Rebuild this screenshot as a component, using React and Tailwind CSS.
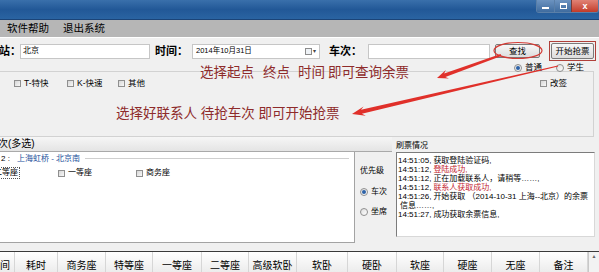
import React from 'react';

const Check = () => (
  <span className="inline-block h-[7px] w-[7px] shrink-0 border border-[#8f8f8f] bg-linear-to-br from-[#d6d6d6] to-[#f8f8f8]" />
);

const Radio = ({ on }) => (
  <span className="flex h-[8px] w-[8px] shrink-0 items-center justify-center rounded-full border border-[#8f8f8f] bg-linear-to-br from-[#dedede] to-white">
    {on && <span className="h-[4px] w-[4px] rounded-full bg-[#2d62a8]" />}
  </span>
);

// tapered arrow polygon from tail to tip
const arrowPoints = (x1, y1, x2, y2, w0, w1, hl, hw) => {
  const dx = x2 - x1;
  const dy = y2 - y1;
  const len = Math.hypot(dx, dy);
  const ux = dx / len;
  const uy = dy / len;
  const nx = -uy;
  const ny = ux;
  const bx = x2 - ux * hl;
  const by = y2 - uy * hl;
  const cx = x2 - ux * (hl * 0.75);
  const cy = y2 - uy * (hl * 0.75);
  return [
    [x1 + nx * w0, y1 + ny * w0],
    [cx + nx * w1, cy + ny * w1],
    [bx + nx * hw, by + ny * hw],
    [x2, y2],
    [bx - nx * hw, by - ny * hw],
    [cx - nx * w1, cy - ny * w1],
    [x1 - nx * w0, y1 - ny * w0],
  ]
    .map((p) => p.map((v) => v.toFixed(1)).join(','))
    .join(' ');
};

const logLines = [
  { t: '14:51:05,', m: '获取登陆验证码,' },
  { t: '14:51:12,', m: '登陆成功,', red: true },
  { t: '14:51:12,', m: '正在加载联系人，请稍等……,' },
  { t: '14:51:12,', m: '联系人获取成功,', red: true },
  { t: '14:51:26,', m: '开始获取 （2014-10-31 上海--北京）的余票' },
  { t: '', m: '信息……,' },
  { t: '14:51:27,', m: '成功获取余票信息,' },
];

const columns = [
  { label: '间', w: 15, right: true },
  { label: '耗时', w: 43 },
  { label: '商务座', w: 48 },
  { label: '特等座', w: 47 },
  { label: '一等座', w: 49 },
  { label: '二等座', w: 47 },
  { label: '高级软卧', w: 48 },
  { label: '软卧', w: 51 },
  { label: '硬卧', w: 49 },
  { label: '软座', w: 47 },
  { label: '硬座', w: 48 },
  { label: '无座', w: 48 },
  { label: '备注', w: 48 },
];

export default function App() {
  return (
    <div className="relative h-[272px] w-[599px] overflow-hidden bg-[#f0f0f0] font-['Liberation_Sans','Noto_Sans_CJK_SC',sans-serif] text-black">
      {/* title bar */}
      <div className="flex h-[20px] items-start justify-end border-b border-[#1b4478] bg-linear-to-b from-[#3a70ab] via-[#225897] to-[#2a64a2]">
        <div className="flex h-[13px] overflow-hidden rounded-b-[3px] border border-t-0 border-[#5a7fa8]">
          <div className="flex w-[17px] items-center justify-center bg-linear-to-b from-[#6c93c0] to-[#3f6c9f]">
            <span className="mt-[4px] h-[2px] w-[7px] bg-white" />
          </div>
          <div className="flex w-[17px] items-center justify-center border-l border-[#5a7fa8] bg-linear-to-b from-[#6c93c0] to-[#3f6c9f]">
            <span className="h-[6px] w-[7px] border border-t-2 border-white" />
          </div>
          <div className="flex w-[27px] items-center justify-center border-l border-[#7a3b35] bg-linear-to-b from-[#e08275] to-[#c23a28] text-[9px] font-bold leading-none text-white">
            x
          </div>
        </div>
      </div>

      {/* menu bar */}
      <div className="flex h-[17px] items-center gap-[14px] bg-[#b6b6b6] pl-[7px] text-[10.5px] leading-none">
        <span>软件帮助</span>
        <span>退出系统</span>
      </div>

      {/* query rows */}
      <div className="border-t border-white">
        <div className="flex h-[26px] items-center text-[8px]">
          <span className="ml-[-1px] w-[21px] text-[11px] font-bold leading-none">站：</span>
          <div className="flex h-[15px] w-[130px] items-center border border-[#c6c6c6] bg-white pl-[2px]">北京</div>
          <span className="ml-[5px] w-[37px] text-[11px] font-bold leading-none">时间：</span>
          <div className="flex h-[15px] w-[128px] items-center border border-[#c6c6c6] bg-white pl-[3px]">
            <span className="flex-1 text-[7.5px]">2014年10月31日</span>
            <span className="h-[7px] w-[7px] border border-[#8c8c8c] bg-[#eef2f6]" />
            <span className="ml-[1px] mr-[3px] text-[6px] text-[#444]">▾</span>
          </div>
          <span className="ml-[9px] w-[39px] text-[11px] font-bold leading-none">车次：</span>
          <div className="h-[15px] w-[122px] border border-[#c6c6c6] bg-white" />
          <button className="ml-[5px] flex h-[14px] w-[45px] items-center justify-center rounded-[2px] border border-[#7a7a7a] bg-linear-to-b from-[#f7f7f7] to-[#dddddd] text-[8.5px] leading-none">
            查找
          </button>
          <div className="ml-[9px] flex h-[20px] w-[47px] items-center justify-center border border-[#b0403a]">
            <button className="flex h-[16px] w-[43px] items-center justify-center rounded-[2px] border border-[#7a7a7a] bg-linear-to-b from-[#f7f7f7] to-[#dddddd] text-[8.5px] leading-none">
              开始抢票
            </button>
          </div>
        </div>
        <div className="flex h-[7px] items-center text-[8.5px] leading-none">
          <div className="ml-[514px] flex items-center gap-[3px]">
            <Radio on />
            <span>普通</span>
          </div>
          <div className="ml-[14px] flex items-center gap-[3px]">
            <Radio />
            <span>学生</span>
          </div>
        </div>
      </div>

      {/* filter group with notes */}
      <div className="h-[66px] w-[594px] border-t border-r border-b border-[#d2d2d2]">
        <div className="flex h-[22px] items-center text-[8.5px] leading-none">
          <div className="ml-[14px] flex w-[53px] items-center gap-[3px]">
            <Check />
            <span>T-特快</span>
          </div>
          <div className="flex w-[51px] items-center gap-[3px]">
            <Check />
            <span>K-快速</span>
          </div>
          <div className="flex w-[82px] items-center gap-[3px]">
            <Check />
            <span>其他</span>
          </div>
          <div className="mt-[-7px] flex w-[340px] self-start text-[13.5px] leading-[16px] text-[#8e2b2b]">
            <span className="mr-[9px]">选择起点</span>
            <span className="mr-[8px]">终点</span>
            <span className="mr-[3px]">时间</span>
            <span>即可查询余票</span>
          </div>
          <div className="flex items-center gap-[3px]">
            <Check />
            <span>改签</span>
          </div>
        </div>
        <div className="mt-[12px] pl-[116px] text-[13.5px] leading-[16px] text-[#8e2b2b]">
          选择好联系人 待抢车次 即可开始抢票
        </div>
      </div>

      {/* section titles */}
      <div className="flex h-[15px] items-center text-[8px] leading-none">
        <div className="flex h-full w-[392px] items-center border-b border-[#a9a9a9] bg-linear-to-b from-[#f6f6f6] to-[#e4e4e4]">
          <span className="ml-[-2px] text-[10px]">次(多选)</span>
        </div>
        <span className="ml-[4px] mt-[2px]">刷票情况</span>
      </div>

      {/* panels */}
      <div className="flex h-[91px] text-[8px] leading-none">
        <div className="w-[355px] border-r border-b border-[#a3a3a3] bg-white">
          <div className="flex h-[14px] items-center">
            <span className="ml-[1px] w-[16px]">2 :</span>
            <span className="text-[#23509a]">上海虹桥 - 北京南</span>
            <span className="ml-[5px] mr-[5px] h-[2px] flex-1 border-t border-b border-t-[#cfcfcf] border-b-white" />
          </div>
          <div className="flex h-[14px] items-center">
            <span className="ml-[-8px] border border-dotted border-[#555] px-[1px] py-[1px]">二等座</span>
            <div className="ml-[38px] flex items-center gap-[3px]">
              <Check />
              <span>一等座</span>
            </div>
            <div className="ml-[44px] flex items-center gap-[3px]">
              <Check />
              <span>商务座</span>
            </div>
          </div>
        </div>
        <div className="w-[41px] pt-[14px] pl-[5px]">
          <div className="h-[10px] leading-[10px]">优先级</div>
          <div className="mt-[11px] flex h-[10px] items-center gap-[3px]">
            <Radio on />
            <span>车次</span>
          </div>
          <div className="mt-[10px] flex h-[10px] items-center gap-[3px]">
            <Radio />
            <span>坐席</span>
          </div>
        </div>
        <div className="h-[85px] w-[199px] border border-t-[#7c7c7c] border-l-[#7c7c7c] border-r-[#d8d8d8] border-b-[#d8d8d8] bg-white pt-[3px] pl-[1px]">
          {logLines.map((l, i) => (
            <div key={i} className="h-[9px] whitespace-nowrap leading-[9px]">
              <span className="mr-[2px]">{l.t}</span>
              <span className={l.red ? 'text-[#c4262e]' : ''}>{l.m}</span>
            </div>
          ))}
        </div>
      </div>

      {/* result table header */}
      <div className="mt-[8px] flex h-[21px] border-t border-[#3a3a3a] text-[10px] leading-none">
        {columns.map((c) => (
          <div
            key={c.label}
            style={{ width: c.w }}
            className={`flex h-full shrink-0 items-end border-r border-[#d6d6d6] bg-linear-to-b from-[#ffffff] to-[#ececec] pb-[1px] ${
              c.right ? 'justify-end pr-[4px]' : 'justify-center'
            }`}
          >
            {c.label}
          </div>
        ))}
        <div className="flex h-full flex-1 justify-center border-l border-[#c8c8c8] bg-[#f2f2f2] pt-[2px] text-[5px] text-[#666]">
          ▲
        </div>
      </div>

      {/* red annotation marks */}
      <svg className="pointer-events-none absolute top-0 left-0" width="599" height="272">
        <ellipse cx="518" cy="50.5" rx="24" ry="8" fill="none" stroke="#d43a34" strokeWidth="1.2" />
        <polygon points={arrowPoints(501, 55, 437, 78, 1.1, 1.8, 11, 4.5)} fill="#e0302a" />
        <polygon points={arrowPoints(558, 66, 352, 114, 0.5, 2, 13, 4.8)} fill="#e0302a" />
      </svg>
    </div>
  );
}
